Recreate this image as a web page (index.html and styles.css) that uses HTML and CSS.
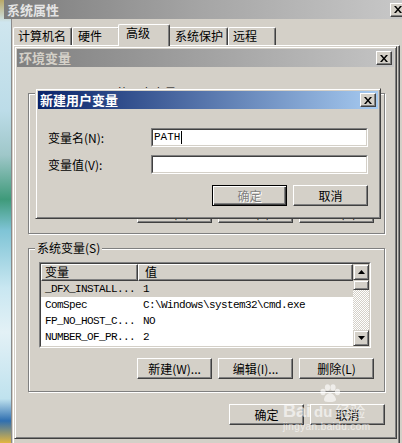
FILE: index.html
```html
<!DOCTYPE html>
<html lang="zh-CN">
<head>
<meta charset="utf-8">
<title>环境变量</title>
<link rel="stylesheet" href="styles.css">
</head>
<body>
<div class="outer-title">
  <span>系统属性</span>
  <span class="close"><svg viewBox="0 0 8 7"><path d="M0 0h2l2 2.5 2-2.5h2l-3 3.5 3 3.5h-2l-2-2.5-2 2.5h-2l3-3.5z"/></svg></span>
</div>
<div class="outer-body">
  <div class="tabs">
    <div class="tab t1">计算机名</div>
    <div class="tab t2">硬件</div>
    <div class="tab t3">高级</div>
    <div class="tab t4">系统保护</div>
    <div class="tab t5">远程</div>
  </div>
  <div class="tabpage"></div>
</div>

<div class="window env">
  <div class="titlebar inactive">
    <span>环境变量</span>
    <span class="close"><svg viewBox="0 0 8 7"><path d="M0 0h2l2 2.5 2-2.5h2l-3 3.5 3 3.5h-2l-2-2.5-2 2.5h-2l3-3.5z"/></svg></span>
  </div>
  <div class="env-client">
    <div class="group user-group">
      <span class="legend">Administrator 的用户变量(U)</span>
      <div class="btnrow">
        <div class="btn">新建(N)...</div>
        <div class="btn">编辑(E)...</div>
        <div class="btn">删除(D)</div>
      </div>
    </div>
    <div class="group sys-group">
      <span class="legend">系统变量(S)</span>
      <div class="lv">
        <div class="lv-in">
          <div class="lv-table">
            <div class="lv-head"><div class="hcell">变量</div><div class="hcell">值</div></div>
            <div class="row sel"><span>_DFX_INSTALL...</span><span>1</span></div>
            <div class="row"><span>ComSpec</span><span>C:\Windows\system32\cmd.exe</span></div>
            <div class="row"><span>FP_NO_HOST_C...</span><span>NO</span></div>
            <div class="row"><span>NUMBER_OF_PR...</span><span>2</span></div>
          </div>
          <div class="sb">
            <div class="sb-btn"><svg viewBox="0 0 7 4"><path d="M3.5 0 7 4H0z"/></svg></div>
            <div class="sb-thumb"></div>
            <div class="sb-track"></div>
            <div class="sb-btn"><svg viewBox="0 0 7 4"><path d="M0 0h7L3.5 4z"/></svg></div>
          </div>
        </div>
      </div>
      <div class="btnrow">
        <div class="btn">新建(W)...</div>
        <div class="btn">编辑(I)...</div>
        <div class="btn">删除(L)</div>
      </div>
    </div>
    <div class="btnrow bottom-row">
      <div class="btn">确定</div>
      <div class="btn">取消</div>
    </div>
  </div>
</div>

<div class="window dlg">
  <div class="titlebar active">
    <span>新建用户变量</span>
    <span class="close"><svg viewBox="0 0 8 7"><path d="M0 0h2l2 2.5 2-2.5h2l-3 3.5 3 3.5h-2l-2-2.5-2 2.5h-2l3-3.5z"/></svg></span>
  </div>
  <div class="dlg-client">
    <label class="lbl">变量名(N):</label>
    <div class="field"><div class="field-in"><span class="val">PATH</span><span class="caret"></span></div></div>
    <label class="lbl">变量值(V):</label>
    <div class="field"><div class="field-in"></div></div>
    <div class="dlg-btns">
      <div class="btn default disabled">确定</div>
      <div class="btn">取消</div>
    </div>
  </div>
</div>

<div class="wm">
  <svg class="wm-paw" viewBox="0 0 22 18">
    <ellipse cx="4" cy="8" rx="2.6" ry="3.2"/>
    <ellipse cx="8.5" cy="3.5" rx="2.6" ry="3.2"/>
    <ellipse cx="14" cy="3.5" rx="2.6" ry="3.2"/>
    <ellipse cx="18.5" cy="8" rx="2.6" ry="3.2"/>
    <path d="M11 9c-3 0-6 4-6 6.5S8 18 11 18s6-.5 6-2.5S14 9 11 9z"/>
  </svg>
  <div class="wm-line"><span>Bai</span><span class="wm-du">du</span><span class="wm-cn">经验</span></div>
  <div class="wm-url">jingyan.baidu.com</div>
</div>
</body>
</html>
```
FILE: styles.css
```css
* { box-sizing: border-box; margin: 0; padding: 0; }
html, body { width: 402px; height: 443px; overflow: hidden; }
body {
  position: relative;
  font-family: "Noto Sans CJK SC", "Liberation Sans", sans-serif;
  font-size: 12px;
  line-height: 14px;
  color: #000;
  background: linear-gradient(180deg, #b9a866 0, #cfe6ef 5%, #bcdce8 25%, #9fc7c9 35%, #3f9a7a 45%, #7fc4d6 52%, #c9e7f1 65%, #e3f1f6 75%, #bfe2ee 90%, #2f6fb0 95%, #e2b640 100%);
}

/* outer "系统属性" window */
.outer-title {
  position: absolute; left: 4px; top: 0; width: 402px; height: 19px;
  display: flex; align-items: center; padding-left: 3px;
  background: linear-gradient(90deg, #7c7c7c 0%, #a6a6a6 50%, #c8c8c8 100%);
  color: #e4e4e4; font-size: 13px; font-weight: 700;
}
.outer-body {
  position: absolute; left: 12px; top: 19px; width: 390px; bottom: 0;
  background: #d4d0c8; box-shadow: -1px 0 #8a8a8a;
  padding: 6px 2px 0 1px;
  display: flex; flex-direction: column;
}
.tabs { display: flex; align-items: flex-end; height: 20px; position: relative; z-index: 1; flex: none; }
.tab {
  height: 18px; background: #d4d0c8;
  border: 1px solid; border-color: #fff #404040 transparent #fff; border-bottom: none;
  box-shadow: inset -1px 0 #808080; border-radius: 2px 2px 0 0;
  padding-left: 4px; font-size: 12px; line-height: 16px; white-space: nowrap;
}
.t1 { width: 59px; }
.t2 { width: 48px; padding-left: 5px; }
.t3 { width: 52px; height: 22px; margin: 0 -2px -1px; position: relative; z-index: 2; padding-left: 7px; }
.t4 { width: 60px; padding-left: 6px; }
.t5 { width: 48px; }
.tabpage {
  flex: 1; border-top: 1px solid #fff; border-left: 1px solid #fff; border-right: 1px solid #404040;
  box-shadow: inset -1px 0 #808080;
}

/* generic window */
.window {
  position: absolute; background: #d4d0c8;
  border: 1px solid; border-color: #d4d0c8 #404040 #404040 #d4d0c8;
  box-shadow: inset 1px 1px #fff, inset -1px -1px #808080;
  padding: 2px; display: flex; flex-direction: column;
}
.env { left: 14px; top: 46px; width: 383px; height: 393px; z-index: 5; }
.dlg { left: 35px; top: 88px; width: 346px; height: 131px; z-index: 10; }

.titlebar {
  height: 18px; flex: none; display: flex; align-items: center;
  padding: 0 2px; font-size: 13px; font-weight: 700; line-height: 18px; white-space: nowrap;
}
.inactive { background: linear-gradient(90deg, #808080, #c4c4c4); color: #d4d0c8; }
.active { background: linear-gradient(90deg, #0a246a, #a6caf0); color: #fff; }
.close {
  margin-left: auto; width: 16px; height: 14px; flex: none; background: #d4d0c8;
  border: 1px solid; border-color: #fff #404040 #404040 #fff;
  box-shadow: inset -1px -1px #808080;
  display: flex; align-items: center; justify-content: center;
}
.close svg { width: 8px; height: 7px; display: block; fill: #000; }

/* environment client */
.env-client { flex: 1; display: flex; flex-direction: column; padding: 26px 9px 0 11px; }
.group { position: relative; border: 1px solid #808080; box-shadow: 1px 1px #fff, inset 1px 1px #fff; flex: none; }
.legend {
  position: absolute; top: -8px; left: 6px; padding: 0 2px;
  background: #d4d0c8; line-height: 14px; white-space: nowrap;
}
.user-group { height: 141px; display: flex; flex-direction: column; justify-content: flex-end; padding: 0 10px 10px; }
.sys-group { height: 144px; margin-top: 14px; padding: 13px 10px 0 10px; display: flex; flex-direction: column; }
.btnrow { display: flex; justify-content: flex-end; gap: 6px; }
.sys-group .btnrow { margin-top: 10px; }
.bottom-row { margin-top: 12px; }

.btn {
  width: 75px; height: 21px; flex: none;
  display: flex; align-items: center; justify-content: center;
  background: #d4d0c8;
  border: 1px solid; border-color: #fff #404040 #404040 #fff;
  box-shadow: inset -1px -1px #808080;
  white-space: nowrap;
}
.btn.default { border-color: #000; box-shadow: inset 1px 1px #fff, inset -1px -1px #404040, inset -2px -2px #808080; }
.btn.disabled { color: #808080; text-shadow: 1px 1px #fff; }

/* list view */
.lv { height: 86px; flex: none; margin-right: 3px; border: 1px solid; border-color: #808080 #fff #fff #808080; }
.lv-in {
  height: 100%; border: 1px solid; border-color: #404040 #d4d0c8 #d4d0c8 #404040;
  background: #fff; display: grid; grid-template-columns: 1fr 16px; overflow: hidden;
}
.lv-table { overflow: hidden; }
.lv-head { display: grid; grid-template-columns: 97px 1fr; height: 17px; }
.hcell {
  background: #d4d0c8; border: 1px solid; border-color: #fff #404040 #404040 #fff;
  box-shadow: inset -1px -1px #808080; padding-left: 3px; line-height: 14px;
}
.hcell + .hcell { padding-left: 6px; }
.row {
  display: grid; grid-template-columns: 97px 1fr; height: 16px;
  font-family: "Liberation Mono", monospace; font-size: 11px; letter-spacing: -0.6px;
  line-height: 16px; white-space: nowrap;
}
.row span:first-child { padding-left: 4px; }
.row span + span { padding-left: 5px; }
.row.sel { background: #d4d0c8; }

.sb { display: flex; flex-direction: column; }
.sb-btn, .sb-thumb {
  flex: none; background: #d4d0c8;
  border: 1px solid; border-color: #d4d0c8 #404040 #404040 #d4d0c8;
  box-shadow: inset 1px 1px #fff, inset -1px -1px #808080;
}
.sb-btn { height: 16px; display: flex; align-items: center; justify-content: center; }
.sb-btn svg { width: 7px; height: 4px; display: block; fill: #000; }
.sb-thumb { height: 10px; }
.sb-track { flex: 1; background: repeating-conic-gradient(#fff 0 25%, #d4d0c8 0 50%) 0 0 / 2px 2px; }

/* new user variable dialog */
.dlg-client {
  flex: 1; display: grid; grid-template-columns: 103px 1fr; row-gap: 8px;
  align-content: start; align-items: center; padding: 19px 10px 0 10px;
}
.lbl { white-space: nowrap; }
.field { height: 19px; border: 1px solid; border-color: #808080 #fff #fff #808080; }
.field-in {
  height: 100%; border: 1px solid; border-color: #404040 #d4d0c8 #d4d0c8 #404040;
  background: #fff; padding-left: 1px; display: flex; align-items: center;
}
.val { font-family: "Liberation Mono", monospace; font-size: 11px; line-height: 13px; }
.caret { width: 1px; height: 13px; background: #000; margin-left: 1px; }
.dlg-btns { grid-column: 1 / -1; margin-top: 3px; display: flex; justify-content: flex-end; gap: 6px; }

/* watermark */
.wm {
  position: absolute; left: 283px; top: 384px; z-index: 20;
  color: rgba(255, 255, 255, 0.62); display: flex; flex-direction: column; align-items: flex-start;
}
.wm-paw { width: 22px; height: 18px; margin-left: 36px; fill: rgba(255, 255, 255, 0.62); display: block; }
.wm-line { display: flex; align-items: baseline; gap: 3px; font: 700 18px/18px "Liberation Sans", sans-serif; }
.wm-du { font-size: 15px; }
.wm-cn { font: 400 15px/18px "Noto Sans CJK SC", sans-serif; }
.wm-url { font: 10px/11px "Liberation Sans", sans-serif; letter-spacing: 0.4px; }
```
